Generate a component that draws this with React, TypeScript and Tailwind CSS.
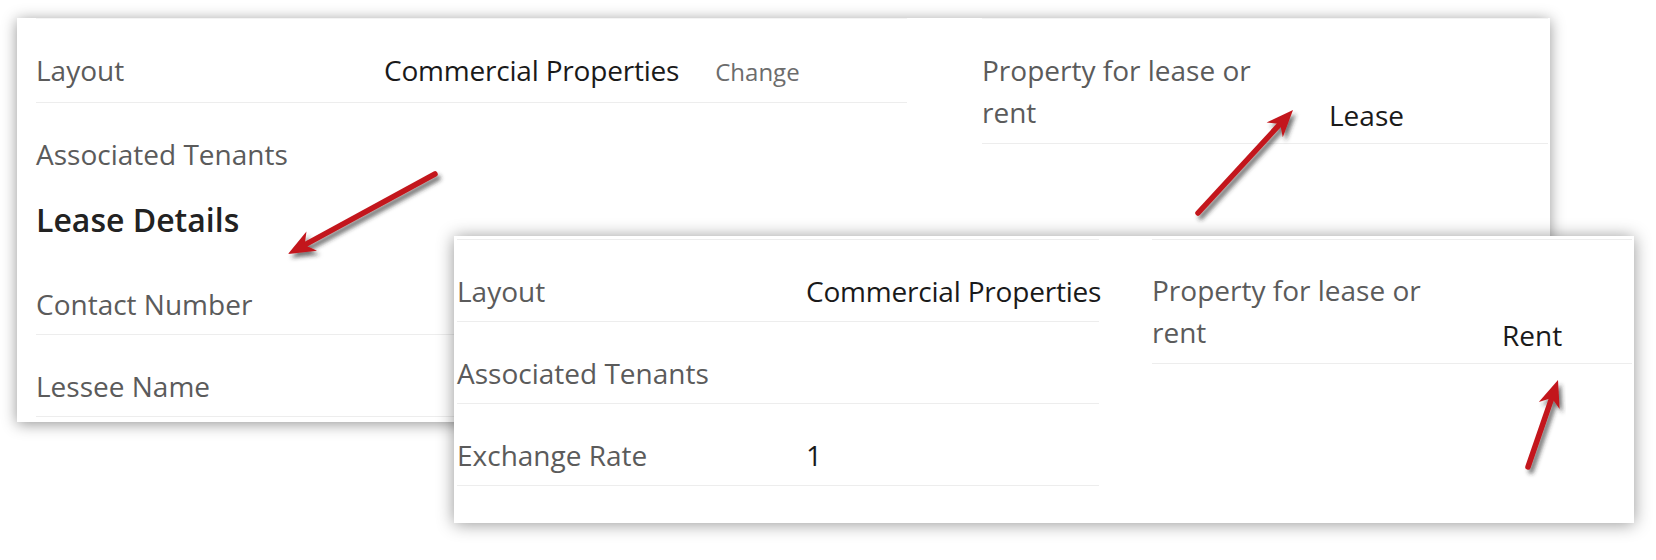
import React from "react";

type Pt = { x: number; y: number };

// red callout arrow: shaft from tail to a notched head at tip
function Arrow({ tail, tip }: { tail: Pt; tip: Pt }) {
  const dx = tip.x - tail.x;
  const dy = tip.y - tail.y;
  const len = Math.hypot(dx, dy);
  const ux = dx / len;
  const uy = dy / len;
  const nx = -uy;
  const ny = ux;
  const h = 27;
  const w = 11;
  const b1 = { x: tip.x - ux * h + nx * w, y: tip.y - uy * h + ny * w };
  const b2 = { x: tip.x - ux * h - nx * w, y: tip.y - uy * h - ny * w };
  const notch = { x: tip.x - ux * (h - 8), y: tip.y - uy * (h - 8) };
  return (
    <g filter="url(#arrowShadow)">
      <line
        x1={tail.x}
        y1={tail.y}
        x2={notch.x}
        y2={notch.y}
        stroke="#c3161c"
        strokeWidth={5.5}
        strokeLinecap="round"
      />
      <polygon
        points={`${tip.x},${tip.y} ${b1.x},${b1.y} ${notch.x},${notch.y} ${b2.x},${b2.y}`}
        fill="#c3161c"
      />
    </g>
  );
}

function Row({
  label,
  children,
  labelWidth,
  border = true,
}: {
  label: string;
  children?: React.ReactNode;
  labelWidth: string;
  border?: boolean;
}) {
  return (
    <div
      className={
        "flex items-baseline pt-[36px] leading-[30px] " +
        (border ? "pb-[15px] border-b border-[#ededed]" : "pb-0")
      }
    >
      <div className={labelWidth + " shrink-0 text-[#5b5b5b]"}>{label}</div>
      <div className="flex items-baseline whitespace-nowrap tracking-[-0.2px] text-[#1a1a1a]">{children}</div>
    </div>
  );
}

function LeaseRentRow({ value, labelWidth, pt }: { value: string; labelWidth: string; pt: string }) {
  return (
    <div className="flex items-end border-b border-[#ededed]">
      <div className={labelWidth + " " + pt + " shrink-0 pr-[56px] pb-[10px] leading-[42px] text-[#5b5b5b]"}>
        Property for lease or rent
      </div>
      <div className="pb-[13px] leading-[30px] text-[#1a1a1a]">{value}</div>
    </div>
  );
}

export default function App() {
  return (
    <div className="relative h-[560px] w-[1656px] overflow-hidden bg-white font-['Open_Sans',sans-serif] text-[28px] font-medium">
      {/* back card: lease record */}
      <div className="absolute left-[17px] top-[18px] flex h-[404px] w-[1533px] bg-white pl-[19px] pr-[2px] shadow-[0_2px_14px_rgba(0,0,0,0.42)]">
        <div className="mr-[75px] w-[871px] border-t border-[#f4f4f4]">
          <Row label="Layout" labelWidth="w-[348px]">
            <span>Commercial Properties</span>
            <span className="ml-[36px] text-[24px] tracking-normal text-[#6c6c6c]">Change</span>
          </Row>
          <Row label="Associated Tenants" labelWidth="w-[348px]" border={false} />
          <div className="pt-[31px] pb-[13px] text-[32px] font-semibold leading-[40px] text-[#222]">
            Lease Details
          </div>
          <Row label="Contact Number" labelWidth="w-[348px]" />
          <Row label="Lessee Name" labelWidth="w-[348px]" />
        </div>
        <div className="w-[566px] border-t border-[#f4f4f4]">
          <LeaseRentRow value="Lease" labelWidth="w-[347px]" pt="pt-[30px]" />
        </div>
      </div>

      {/* front card: rent record */}
      <div className="absolute left-[454px] top-[236px] flex h-[287px] w-[1180px] bg-white pl-[3px] pr-[2px] pt-[3px] shadow-[0_1px_16px_rgba(0,0,0,0.42)]">
        <div className="mr-[53px] w-[642px] border-t border-[#ededed]">
          <Row label="Layout" labelWidth="w-[349px]">
            <span>Commercial Properties</span>
          </Row>
          <Row label="Associated Tenants" labelWidth="w-[349px]" />
          <Row label="Exchange Rate" labelWidth="w-[349px]">
            <span>1</span>
          </Row>
        </div>
        <div className="w-[480px] border-t border-[#ededed]">
          <LeaseRentRow value="Rent" labelWidth="w-[350px]" pt="pt-[29px]" />
        </div>
      </div>

      <svg className="pointer-events-none absolute left-0 top-0" width={1656} height={560}>
        <defs>
          <filter id="arrowShadow" x="-20%" y="-20%" width="140%" height="140%">
            <feDropShadow dx="3" dy="4" stdDeviation="2" floodColor="#2a2a2a" floodOpacity="0.65" />
          </filter>
        </defs>
        <Arrow tail={{ x: 435, y: 174 }} tip={{ x: 288, y: 254 }} />
        <Arrow tail={{ x: 1198, y: 213 }} tip={{ x: 1293, y: 110 }} />
        <Arrow tail={{ x: 1528, y: 467 }} tip={{ x: 1558, y: 380 }} />
      </svg>
    </div>
  );
}
